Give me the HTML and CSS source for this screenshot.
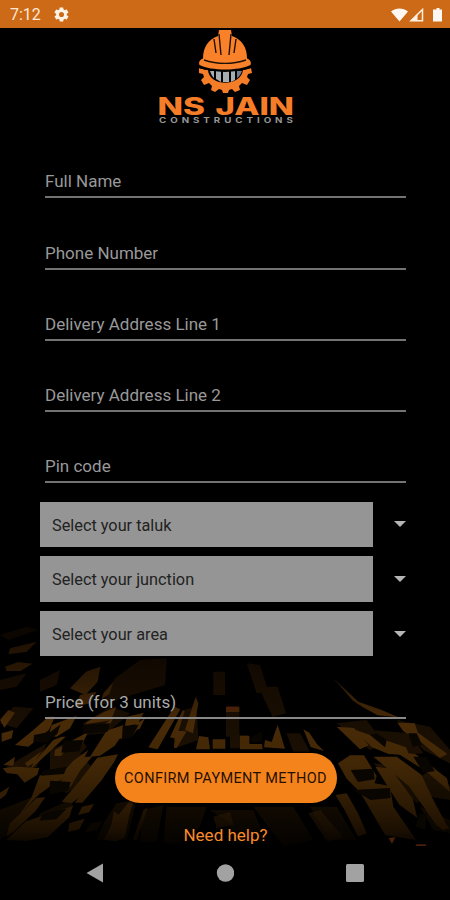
FILE: index.html
```html
<!DOCTYPE html>
<html lang="en">
<head>
<meta charset="utf-8">
<meta name="viewport" content="width=device-width, initial-scale=1">
<title>NS Jain Constructions</title>
<link rel="stylesheet" href="styles.css">
</head>
<body>
<div class="screen">
  <svg class="backdrop" viewBox="0 -30 1350 750" aria-hidden="true">
    <defs>
      <linearGradient id="amber" gradientUnits="userSpaceOnUse" x1="0" y1="0" x2="0" y2="710">
        <stop offset="0" stop-color="#160b01"/><stop offset=".3" stop-color="#2c1905"/><stop offset=".48" stop-color="#482a07"/><stop offset=".65" stop-color="#412706"/><stop offset=".8" stop-color="#301c04"/><stop offset=".92" stop-color="#1e1102"/><stop offset="1" stop-color="#080400"/>
      </linearGradient>
      <linearGradient id="brown" gradientUnits="userSpaceOnUse" x1="0" y1="0" x2="0" y2="710">
        <stop offset="0" stop-color="#090400"/><stop offset=".4" stop-color="#180d02"/><stop offset=".7" stop-color="#1b1002"/><stop offset="1" stop-color="#040200"/>
      </linearGradient>
    </defs>
    <g fill="url(#brown)">
      <path d="M0 75l80-25 35 10-90 30zM345 205l75-55 80-5-5 80-100 30-90 30zM120 210l60-30-10 45-50 20zM0 210l80-20-30 40-50 10zM640 185h35v70h-35zM740 160l40 5 25 80-35 5zM775 230h58l25 80-40 10zM0 340l40-50 60 5-50 60zM250 340l80-50 60 20-70 60-70 5zM530 360l20-60 40-10 5 100-70 25zM678 290h40v90h-40zM690 375h55v40h-55z"/>
      <path d="M150 420l90-40 20 30-60 65-50 10zM20 470l120-70-30 70-90 20zM140 510l100-80 50 60-90 60zM120 610l90-40 10 20-60 70-60 10zM0 600l100-40-20 60-80 70zM310 640l40-60 60-10-30 120h-90zM430 600l60-15-20 110h-50zM500 590h120l-20 60-60 50h-50zM630 600h130l40 100h-100l-10-60zM760 590h120l60 100-90 20zM930 590h80l60 100h-80zM860 370h40l30 55h-50z"/>
      <path d="M1010 340l90-10 50 70-40 20zM1110 360l120 10 40 60-70 5zM1190 330l100 20 60 70v40l-80-40zM1120 460l100 10 60 90-30 20zM1240 520l60-50 50 60v40l-60-10zM1260 590l90 40v40l-50-10z"/>
    </g>
    <g fill="url(#amber)">
      <path d="M15 170l40-14 42 5-35 22H20zM30 115l80-20-30 30-55 8zM155 115l45-15-30 30-30 5z"/>
      <path d="M210 235l48-50 43-15-8 45-37 40zM240 255l50-10-20 35-45 10zM310 250l30-34-12 36-23 16zM0 330l25-30 20 8-32 45zM5 370l35-10-5 25-30 10z"/>
      <path d="M45 405l55-45 45-40h20l-18 40-62 50zM155 345l75-28-20 38-40 25-25-2zM262 335l52-30 35-14-16 40-78 12zM285 360l55-35-14 25-36 13zM380 320l52-12-18 32-40 12zM395 350l40-25-16 32-24 5zM342 380l30-24 40 2-18 24-45 6z"/>
      <path d="M10 465l35-25-5 27zM160 390l25-10 12 0-75 70-30 28 10-22zM75 460l50-36-25 36-18 10zM165 420l100-55-22 43h-35l-25 30h-20zM220 452l45-32-20 35-55 50-35 20z"/>
      <path d="M445 412l78-122 18 8-68 120zM510 382l38-82 6 4-26 82zM555 360l32-100 8 20-16 90zM525 362l35 2-30 50h-8zM597 378l28 4 5 36h-42zM678 290h40v16h-40zM720 378h28v24l38 0 2 16h-68zM638 388h38v28h-38z"/>
      <path d="M792 412l3-22 20 6 18-52 22 72zM910 358l18 10 22 33 22 22-40-12zM1000 205l75 70 70 25 50 22-62-6-44-24-30-20zM1010 350l52 4 44 52-26 12zM1060 358l48 16 110 38 10 24-62-4-50-20zM1192 338l52 2 10 28 88 64-22 12-60-50-50-30z"/>
      <path d="M8 475l40-5 70 4-6 20-38 24-22-25-32-4zM120 495l80-6-8 10-74 54-42 42-20 22 38-54zM30 640l80-76 26-2-30 42-66 62-22 14zM0 548l28-18-10 24-18 14z"/>
      <path d="M270 440l50-78 48-16 14 6-38 55-44 30zM190 502l60-62 26 0-36 42-28 48-36 2 2-14zM185 575l52-60 55-72 62-10-12 24-42 60-26 18-58 44zM310 462l32-10-35 56-60 70h-22z"/>
      <path d="M18 690l60-56 60-20 80-26-10 34-66 60-60 10zM246 590l36-8-14 24-34 10zM208 640l46-14-16 32-34 8zM312 690l22-46 8-40 14 10 40-50 12-12-20 64-14 66-24 12z"/>
      <path d="M1014 460l36-24 42 0 38 62-6 22 46 8 10 62 68 100-92-14-76-130-40-40zM1006 555l34-5 34 60 26 60-26 10-40-80zM1126 470l46 6 66 90 14 58-54-40zM1120 440l70 0 74 54 34 72 48 90-60-44-60-84zM1185 425l62 8 94 72 9 40-70-60zM1278 602l24-4 46 56-18 6-20-14z"/>
      <path class="dim" d="M925 610l36-10 70 84-50 10zM430 600l14-10-20 60-14 40-12 2zM640 620l50-15 10 40-50 10z"/>
      <path class="ember" d="M1166 684l20-2-10 20zM1250 703h26l4 5h-34zM680 290h34v12h-34z"/>
    </g>
    <g class="shade">
      <path d="M102 375l50-10 30-22-10 28-32 26h-40zM248 345l82-5-8 26-75 6zM368 348l48-4-22 40-28 4zM190 392l60-2-12 34-54 4zM128 482l72-12-8 22-70 5zM150 512l62 4-8 26-56 12zM130 610l70-14-32 32-50 4zM270 640l40-8-18 28-38 8zM1052 480l68-4 4 32-50 8zM1060 540l110-6 2 30-60 6zM1110 375l20-5 30 20-5 22zM1225 370l25 0 16 34-28 6zM1240 440l40 0 24 44-34 4zM750 384l34-20 4 30-30 4zM1260 610l20 0-4 50-30-10z"/>
    </g>
  </svg>
  <header class="status">
    <div class="status-left">
      <span>7:12</span>
      <svg width="17" height="17" viewBox="0 0 24 24" aria-hidden="true"><path fill="#fff3e8" fill-rule="evenodd" d="M19.4 13a7.7 7.7 0 0 0 0-2l2.1-1.6c.2-.2.3-.4.1-.7l-2-3.4c-.1-.3-.4-.3-.6-.2l-2.5 1a7.3 7.3 0 0 0-1.7-1l-.4-2.6c0-.3-.2-.5-.5-.5h-4c-.3 0-.5.2-.5.5l-.4 2.6a8 8 0 0 0-1.7 1l-2.5-1c-.2-.1-.5 0-.6.2l-2 3.4c-.1.3-.1.5.1.7L4.500 11a8 8 0 0 0 0 2l-2.100 1.600c-.2.2-.3.5-.1.7l2 3.400c.1.3.4.3.6.2l2.500-1c.5.4 1.100.7 1.700 1l.4 2.600c0 .3.2.5.5.5h4c.3 0 .5-.2.5-.5l.4-2.600a7 7 0 0 0 1.700-1l2.500 1c.2.1.5 0 .6-.2l2-3.400c.1-.2.1-.5-.1-.7zM12 15.600a3.600 3.600 0 1 1 0-7.200 3.600 3.600 0 0 1 0 7.200z"/></svg>
    </div>
    <svg class="status-icons" width="52" height="16" viewBox="0 0 52 16" aria-hidden="true">
      <path fill="#fff8f2" d="M1 4.500C6 .5 13 .5 18 4.500L9.500 14.500zM46.500 1h3v1.500H52V14.500h-9V2.500h3.500z"/>
      <path fill="none" stroke="#fff0e2" stroke-width="1.500" d="M32.500 2.500v11.200H21z"/><path fill="#fff0e2" d="M20.500 14l7-7v7z"/>
    </svg>
  </header>
  <main class="content">
    <svg class="logo" width="140" height="99" viewBox="155 28 140 99" role="img" aria-label="NS Jain Constructions">
      <path fill="#f67d28" fill-rule="evenodd" d="M199 68l8 2h37l7-2 1 5-4 1-1 3 3 3-3 5-5-2-3 3 1 4-5 2-3-3-3 1-1 3h-5l-1-3-3-1-4 3-4-2 1-4-3-3-5 2-3-5 3-3-1-3-4-1zM208 70c1 17 33 17 35 0z"/>
      <path fill="#a7acb0" d="M210 71h4v7c-2-2-3-4-4-7zM216 71h5v11l-5-3zM223 71h6v11h-6zM231 71h4v9l-4 2z"/><path fill="#747b8c" d="M237 71h5c-1 3-3 6-5 7z"/>
      <path fill="#f98129" d="M199.500 65c-1-3 0-5 3.500-6.500 0-11 5-19 15-22.500l1-6h12l1 6c10 3.500 15 11.500 15 22.500 3.500 1.500 4.500 3.500 3.500 6.500-12 6-39 6-51 0z"/>
      <path fill="none" stroke="#201005" stroke-width="1.400" d="M219 34l2 21M231 34l-2 21M214 39l2 14M236 39l-2 14M204 60c13 4.500 29 4.500 42 0"/>
      <path fill="none" stroke="#000" stroke-width="1.300" d="M199 67.500c16 5 36 5 52 0"/>
      <g class="logo-name">
        <text x="157.500" y="115" textLength="47.500" lengthAdjust="spacingAndGlyphs">NS</text>
        <text x="215.500" y="115" textLength="78.500" lengthAdjust="spacingAndGlyphs">JAIN</text>
      </g>
      <g class="logo-sub" transform="translate(0 122.600) scale(1.300 1)">
        <text x="122.300" y="0" textLength="103" lengthAdjust="spacing">CONSTRUCTIONS</text>
      </g>
    </svg>
    <form class="form">
      <div class="field">Full Name</div>
      <div class="field">Phone Number</div>
      <div class="field">Delivery Address Line 1</div>
      <div class="field">Delivery Address Line 2</div>
      <div class="field">Pin code</div>
      <div class="selects">
        <div class="select"><span class="select-box">Select your taluk</span><i class="caret"></i></div>
        <div class="select"><span class="select-box">Select your junction</span><i class="caret"></i></div>
        <div class="select"><span class="select-box">Select your area</span><i class="caret"></i></div>
      </div>
      <div class="field price">Price (for 3 units)</div>
      <button class="confirm" type="button">CONFIRM PAYMENT METHOD</button>
      <a class="help">Need help?</a>
    </form>
  </main>
  <nav class="nav">
    <svg width="18" height="20" viewBox="0 0 18 20"><path fill="#a2a2a2" d="M17 .5v19L.5 10z"/></svg>
    <svg width="18" height="20" viewBox="0 0 18 20"><circle cx="9.500" cy="10" r="8.700" fill="#a2a2a2"/></svg>
    <svg width="18" height="20" viewBox="0 0 18 20"><rect y="1" width="18" height="18" rx="1.500" fill="#a2a2a2"/></svg>
  </nav>
</div>
</body>
</html>
```
FILE: styles.css
```css
* { box-sizing: border-box; }
body { margin: 0; background: #000; font-family: Roboto, sans-serif; }
.screen { position: relative; width: 450px; height: 900px; overflow: hidden; display: flex; flex-direction: column; background: #000; }
.backdrop { position: absolute; left: 0; bottom: 50px; width: 450px; height: 250px; filter: blur(.5px); }
.shade { fill: #090500; }
.dim { opacity: .6; }
.ember { fill: #4a2008; }
.status { height: 28px; flex: none; background: #cc6a17; display: flex; justify-content: space-between; align-items: center; padding: 1px 8px 0 10px; color: #ffe9d6; font-size: 16px; }
.status-left { display: flex; align-items: center; gap: 12px; }
.content { position: relative; flex: 1; display: flex; flex-direction: column; }
.logo { display: block; margin-left: 155px; flex: none; }
.logo-name { font: 800 24px Inter, sans-serif; fill: #f67d28; }
.logo-sub { font: 700 7.500px Inter, sans-serif; fill: #969696; }
.form { display: flex; flex-direction: column; padding: 0 44px 0 45px; }
.field { height: 71.250px; display: flex; align-items: flex-end; padding-bottom: 6px; border-bottom: 2px solid #737373; color: #999; font-size: 17px; line-height: 18px; }
.selects { display: flex; flex-direction: column; gap: 9px; margin: 18.300px 0 0 -5px; }
.select { display: flex; align-items: center; justify-content: space-between; }
.select-box { width: 333px; height: 45.600px; background: #959595; color: #222; display: flex; align-items: center; padding: 2px 12px 0; font-size: 16.300px; }
.caret { width: 0; height: 0; border: 6px solid transparent; border-top: 6px solid #b5b5b5; border-bottom: 0; }
.field.price { height: 62.500px; border-color: #898989; color: #aaa; }
.confirm { width: 222px; height: 50px; margin: 34px 0 0 69.500px; padding: 2px 0 0; border: 0; border-radius: 25px; background: #f5831b; color: #251000; font: 400 14.500px Roboto, sans-serif; letter-spacing: .35px; white-space: nowrap; box-shadow: 0 0 2px 1px #000; }
.help { align-self: center; margin-top: 22px; color: #f88a2c; font-size: 17px; line-height: 20px; }
.nav { position: relative; height: 54px; flex: none; display: flex; justify-content: space-between; padding: 17px 86px 0 86px; }
```
